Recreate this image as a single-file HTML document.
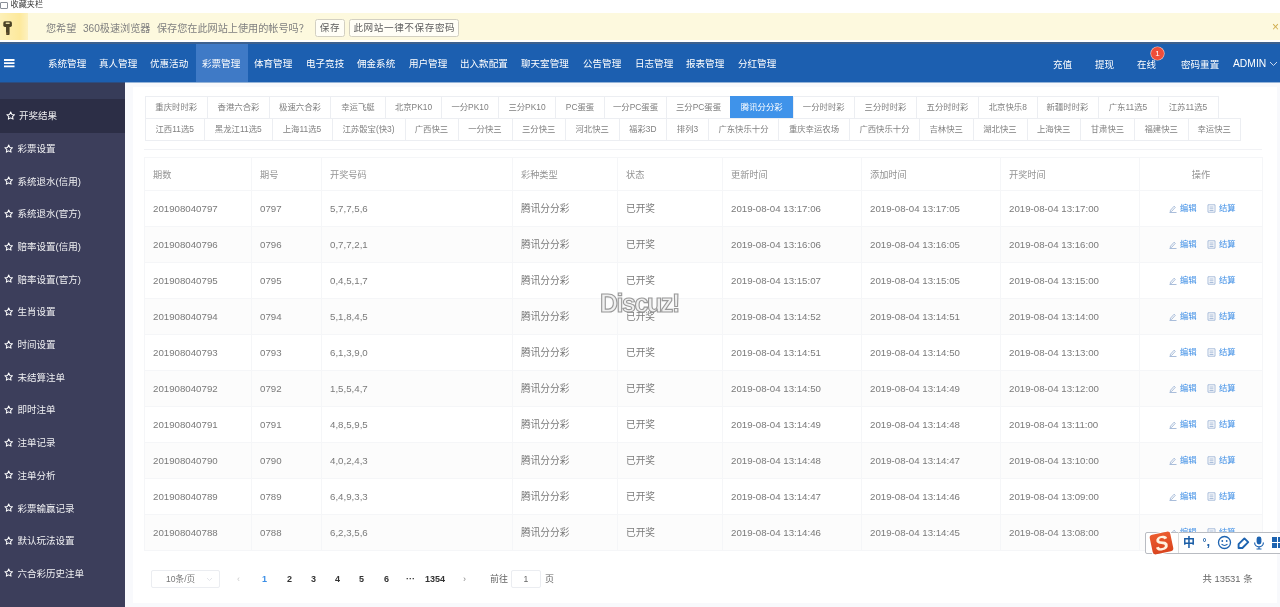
<!DOCTYPE html><html lang="zh-CN"><head><meta charset="utf-8"><title>开奖结果</title><style>
*{box-sizing:border-box;margin:0;padding:0}
html,body{width:1280px;height:607px;overflow:hidden;background:#fff}
body{filter:blur(.45px);font-family:"Liberation Sans","Noto Sans CJK SC",sans-serif;position:relative;color:#555;font-size:9.3px}
.abs{position:absolute}
#fav{left:0;top:0;width:1280px;height:13px;background:#fff;color:#333;font-size:8.1px;line-height:12px}
#fav span{position:absolute;left:10.6px;top:-1.2px}
#fav i{position:absolute;left:0;top:2px;width:8px;height:7px;border:1px solid #8a8f99;border-radius:1px}
#ybar{left:0;top:13px;width:1280px;height:27px;background:#fdf9de;color:#808080;font-size:10.15px;line-height:28px}
#ybar .k{position:absolute;left:0;top:0;width:28px;height:27px;background:linear-gradient(90deg,#fdf0b8 0,#fde99c 70%,#fdf1c0 100%)}
#ybar .t{position:absolute;left:46px;top:1.5px;white-space:nowrap;word-spacing:3.7px}
.btn{position:absolute;top:6px;height:18px;line-height:16px;border:1px solid #d3d0c2;border-radius:2.5px;background:#fffef6;color:#606060;font-size:9.6px;text-align:center;letter-spacing:0.6px;padding-left:.6px}
#nav{left:0;top:42px;width:1280px;height:40px;border-top:2px solid #3d618f;background:#1c5fb0;color:#fff;font-size:9.55px;line-height:41px}
#nav .it{position:absolute;top:-3.2px;height:41px;white-space:nowrap;line-height:45px}
#nav .act{position:absolute;left:196px;top:0;width:52px;height:38px;background:#3f7ac6}
#side{left:0;top:82px;width:124.5px;height:525px;background:#3c3e5b;color:rgba(255,255,255,.92);font-size:9.5px}
#side .top{position:absolute;left:0;top:0;width:124.5px;height:17px;background:#373c59}
#side .on{position:absolute;left:0;top:17px;width:124.5px;height:33.5px;background:#2c2e46}
#side .it{position:absolute;left:17.6px;white-space:nowrap;height:14px;line-height:14px}
#side svg{position:absolute;left:4.4px}
#main{left:124.5px;top:82px;width:1155.5px;height:525px;background:#f8f9fc}
#card{left:8px;top:4.5px;width:1144px;height:516.5px;background:#fff}
.tab{position:absolute;height:23px;line-height:21px;border:1px solid #eceef2;text-align:center;font-size:8.4px;color:#808080;background:#fff;white-space:nowrap}
.tab.on{background:#3f93ea;border-color:#3f93ea;color:#fff}
table{border-collapse:collapse;position:absolute;left:144px;top:157px;width:1118px;table-layout:fixed;font-size:9.7px;color:#7a7a7a}
th,td{border:1px solid #f5f6f8;text-align:left;padding:0 0 1px 8px;font-weight:normal;white-space:nowrap}
th{height:33px;color:#939393;font-size:9.2px}
td{height:36px}
tr.s td{background:#fcfcfc}
td.op,th.op{text-align:center;padding:0}
td.op{color:#3f8fe6;font-size:8.3px;position:relative}
td.op span{position:absolute;top:11.2px;line-height:12px}
td.op svg{position:absolute;top:12.8px}
.pg{position:absolute;top:572px;height:14px;line-height:14px;font-size:9px;color:#444;white-space:nowrap}
</style></head><body>
<div id="fav" class="abs"><i></i><span>收藏夹栏</span></div>
<div id="ybar" class="abs"><div class="k"><svg width="28" height="28" viewBox="0 0 28 28"><rect x="3.3" y="8.3" width="8.6" height="5.6" rx="1.6" fill="#4a4226"/><rect x="6" y="13" width="3.6" height="9" rx="1" fill="#4f4528"/><rect x="5.6" y="9.6" width="4.2" height="1.3" rx=".6" fill="#e9dca6"/><rect x="6.2" y="19.6" width="1.2" height="1.2" fill="#a07a4a"/></svg></div><div class="t">您希望 360极速浏览器 保存您在此网站上使用的帐号吗？</div><div class="btn" style="left:315px;width:29.5px">保存</div><div class="btn" style="left:349.3px;width:109.5px">此网站一律不保存密码</div><div class="abs" style="left:1272px;top:0;color:#d0ae4e;font-size:12px">×</div></div>
<div id="nav" class="abs"><div class="act"></div>
<svg class="abs" style="left:4px;top:15.1px" width="11" height="10" viewBox="0 0 11 10"><path d="M0 1h10.5M0 4.2h10.5M0 7.4h10.5" stroke="#fff" stroke-width="1.8"/></svg>
<div class="it" style="left:48px">系统管理</div>
<div class="it" style="left:99px">真人管理</div>
<div class="it" style="left:150px">优惠活动</div>
<div class="it" style="left:202px">彩票管理</div>
<div class="it" style="left:254px">体育管理</div>
<div class="it" style="left:306px">电子竞技</div>
<div class="it" style="left:357px">佣金系统</div>
<div class="it" style="left:409px">用户管理</div>
<div class="it" style="left:460px">出入款配置</div>
<div class="it" style="left:521px">聊天室管理</div>
<div class="it" style="left:583px">公告管理</div>
<div class="it" style="left:635px">日志管理</div>
<div class="it" style="left:686px">报表管理</div>
<div class="it" style="left:738px">分红管理</div>
<div class="it" style="left:1053px;top:-2.2px">充值</div>
<div class="it" style="left:1095px;top:-2.2px">提现</div>
<div class="it" style="left:1137px;top:-2.2px">在线</div>
<div class="it" style="left:1181px;top:-2.2px">密码重置</div>
<div class="it" style="left:1233px;font-size:10.3px">ADMIN</div>
<svg class="abs" style="left:1269px;top:17px" width="9" height="6" viewBox="0 0 9 6"><path d="M1 1l3.5 3.5L8 1" stroke="#c9d8ef" stroke-width="1" fill="none"/></svg>
<div class="abs" style="left:1151px;top:3px;width:13px;height:13px;border-radius:6.5px;box-shadow:0 0 0 .6px #f3c9c0;background:#ee4d3a;color:#fff;font-size:8px;line-height:13px;text-align:center">1</div>
</div>
<div id="side" class="abs"><div class="top"></div><div class="on"></div>
<svg style="top:28.8px;margin-left:1.5px" width="9.4" height="9.4" viewBox="0 0 24 24"><path d="M12 2.5l2.9 6.2 6.8.8-5 4.7 1.3 6.7-6-3.3-6 3.3 1.3-6.7-5-4.7 6.8-.8z" fill="none" stroke="#fff" stroke-width="2.6" stroke-linejoin="round"/></svg>
<div class="it" style="top:27.3px;margin-left:1.5px">开奖结果</div>
<svg style="top:61.5px" width="9.4" height="9.4" viewBox="0 0 24 24"><path d="M12 2.5l2.9 6.2 6.8.8-5 4.7 1.3 6.7-6-3.3-6 3.3 1.3-6.7-5-4.7 6.8-.8z" fill="none" stroke="#fff" stroke-width="2.6" stroke-linejoin="round"/></svg>
<div class="it" style="top:60.0px">彩票设置</div>
<svg style="top:94.2px" width="9.4" height="9.4" viewBox="0 0 24 24"><path d="M12 2.5l2.9 6.2 6.8.8-5 4.7 1.3 6.7-6-3.3-6 3.3 1.3-6.7-5-4.7 6.8-.8z" fill="none" stroke="#fff" stroke-width="2.6" stroke-linejoin="round"/></svg>
<div class="it" style="top:92.7px">系统退水(信用)</div>
<svg style="top:126.8px" width="9.4" height="9.4" viewBox="0 0 24 24"><path d="M12 2.5l2.9 6.2 6.8.8-5 4.7 1.3 6.7-6-3.3-6 3.3 1.3-6.7-5-4.7 6.8-.8z" fill="none" stroke="#fff" stroke-width="2.6" stroke-linejoin="round"/></svg>
<div class="it" style="top:125.3px">系统退水(官方)</div>
<svg style="top:159.5px" width="9.4" height="9.4" viewBox="0 0 24 24"><path d="M12 2.5l2.9 6.2 6.8.8-5 4.7 1.3 6.7-6-3.3-6 3.3 1.3-6.7-5-4.7 6.8-.8z" fill="none" stroke="#fff" stroke-width="2.6" stroke-linejoin="round"/></svg>
<div class="it" style="top:158.0px">赔率设置(信用)</div>
<svg style="top:192.2px" width="9.4" height="9.4" viewBox="0 0 24 24"><path d="M12 2.5l2.9 6.2 6.8.8-5 4.7 1.3 6.7-6-3.3-6 3.3 1.3-6.7-5-4.7 6.8-.8z" fill="none" stroke="#fff" stroke-width="2.6" stroke-linejoin="round"/></svg>
<div class="it" style="top:190.7px">赔率设置(官方)</div>
<svg style="top:224.9px" width="9.4" height="9.4" viewBox="0 0 24 24"><path d="M12 2.5l2.9 6.2 6.8.8-5 4.7 1.3 6.7-6-3.3-6 3.3 1.3-6.7-5-4.7 6.8-.8z" fill="none" stroke="#fff" stroke-width="2.6" stroke-linejoin="round"/></svg>
<div class="it" style="top:223.4px">生肖设置</div>
<svg style="top:257.6px" width="9.4" height="9.4" viewBox="0 0 24 24"><path d="M12 2.5l2.9 6.2 6.8.8-5 4.7 1.3 6.7-6-3.3-6 3.3 1.3-6.7-5-4.7 6.8-.8z" fill="none" stroke="#fff" stroke-width="2.6" stroke-linejoin="round"/></svg>
<div class="it" style="top:256.1px">时间设置</div>
<svg style="top:290.2px" width="9.4" height="9.4" viewBox="0 0 24 24"><path d="M12 2.5l2.9 6.2 6.8.8-5 4.7 1.3 6.7-6-3.3-6 3.3 1.3-6.7-5-4.7 6.8-.8z" fill="none" stroke="#fff" stroke-width="2.6" stroke-linejoin="round"/></svg>
<div class="it" style="top:288.7px">未结算注单</div>
<svg style="top:322.9px" width="9.4" height="9.4" viewBox="0 0 24 24"><path d="M12 2.5l2.9 6.2 6.8.8-5 4.7 1.3 6.7-6-3.3-6 3.3 1.3-6.7-5-4.7 6.8-.8z" fill="none" stroke="#fff" stroke-width="2.6" stroke-linejoin="round"/></svg>
<div class="it" style="top:321.4px">即时注单</div>
<svg style="top:355.6px" width="9.4" height="9.4" viewBox="0 0 24 24"><path d="M12 2.5l2.9 6.2 6.8.8-5 4.7 1.3 6.7-6-3.3-6 3.3 1.3-6.7-5-4.7 6.8-.8z" fill="none" stroke="#fff" stroke-width="2.6" stroke-linejoin="round"/></svg>
<div class="it" style="top:354.1px">注单记录</div>
<svg style="top:388.3px" width="9.4" height="9.4" viewBox="0 0 24 24"><path d="M12 2.5l2.9 6.2 6.8.8-5 4.7 1.3 6.7-6-3.3-6 3.3 1.3-6.7-5-4.7 6.8-.8z" fill="none" stroke="#fff" stroke-width="2.6" stroke-linejoin="round"/></svg>
<div class="it" style="top:386.8px">注单分析</div>
<svg style="top:421.0px" width="9.4" height="9.4" viewBox="0 0 24 24"><path d="M12 2.5l2.9 6.2 6.8.8-5 4.7 1.3 6.7-6-3.3-6 3.3 1.3-6.7-5-4.7 6.8-.8z" fill="none" stroke="#fff" stroke-width="2.6" stroke-linejoin="round"/></svg>
<div class="it" style="top:419.5px">彩票输赢记录</div>
<svg style="top:453.6px" width="9.4" height="9.4" viewBox="0 0 24 24"><path d="M12 2.5l2.9 6.2 6.8.8-5 4.7 1.3 6.7-6-3.3-6 3.3 1.3-6.7-5-4.7 6.8-.8z" fill="none" stroke="#fff" stroke-width="2.6" stroke-linejoin="round"/></svg>
<div class="it" style="top:452.1px">默认玩法设置</div>
<svg style="top:486.3px" width="9.4" height="9.4" viewBox="0 0 24 24"><path d="M12 2.5l2.9 6.2 6.8.8-5 4.7 1.3 6.7-6-3.3-6 3.3 1.3-6.7-5-4.7 6.8-.8z" fill="none" stroke="#fff" stroke-width="2.6" stroke-linejoin="round"/></svg>
<div class="it" style="top:484.8px">六合彩历史注单</div>
</div>
<div id="main" class="abs"><div id="card" class="abs"></div></div>
<div class="abs" style="left:0;top:82px;width:1280px;height:1px;background:rgba(28,95,176,.45)"></div>
<div class="abs" style="left:144px;top:149px;width:1118px;height:1px;background:#f1f2f5"></div>
<div class="tab" style="left:144.5px;top:96px;width:63.5px">重庆时时彩</div>
<div class="tab" style="left:207px;top:96px;width:63px">香港六合彩</div>
<div class="tab" style="left:269px;top:96px;width:62px">极速六合彩</div>
<div class="tab" style="left:330px;top:96px;width:56px">幸运飞艇</div>
<div class="tab" style="left:385px;top:96px;width:57px">北京PK10</div>
<div class="tab" style="left:441px;top:96px;width:58px">一分PK10</div>
<div class="tab" style="left:498px;top:96px;width:58px">三分PK10</div>
<div class="tab" style="left:555px;top:96px;width:50px">PC蛋蛋</div>
<div class="tab" style="left:604px;top:96px;width:63px">一分PC蛋蛋</div>
<div class="tab" style="left:666px;top:96px;width:65px">三分PC蛋蛋</div>
<div class="tab on" style="left:730px;top:96px;width:63.5px">腾讯分分彩</div>
<div class="tab" style="left:792.5px;top:96px;width:62.5px">一分时时彩</div>
<div class="tab" style="left:854px;top:96px;width:63px">三分时时彩</div>
<div class="tab" style="left:916px;top:96px;width:63px">五分时时彩</div>
<div class="tab" style="left:978px;top:96px;width:59.5px">北京快乐8</div>
<div class="tab" style="left:1036.5px;top:96px;width:62px">新疆时时彩</div>
<div class="tab" style="left:1097.5px;top:96px;width:61px">广东11选5</div>
<div class="tab" style="left:1157.5px;top:96px;width:61px">江苏11选5</div>
<div class="tab" style="left:144.5px;top:118px;width:60.5px">江西11选5</div>
<div class="tab" style="left:204px;top:118px;width:68.5px">黑龙江11选5</div>
<div class="tab" style="left:271.5px;top:118px;width:61px">上海11选5</div>
<div class="tab" style="left:331.5px;top:118px;width:74px">江苏骰宝(快3)</div>
<div class="tab" style="left:404.5px;top:118px;width:54px">广西快三</div>
<div class="tab" style="left:457.5px;top:118px;width:55px">一分快三</div>
<div class="tab" style="left:511.5px;top:118px;width:54.5px">三分快三</div>
<div class="tab" style="left:565px;top:118px;width:54.5px">河北快三</div>
<div class="tab" style="left:618.5px;top:118px;width:48.5px">福彩3D</div>
<div class="tab" style="left:666px;top:118px;width:43px">排列3</div>
<div class="tab" style="left:708px;top:118px;width:71px">广东快乐十分</div>
<div class="tab" style="left:778px;top:118px;width:72px">重庆幸运农场</div>
<div class="tab" style="left:849px;top:118px;width:71px">广西快乐十分</div>
<div class="tab" style="left:919px;top:118px;width:54.5px">吉林快三</div>
<div class="tab" style="left:972.5px;top:118px;width:55px">湖北快三</div>
<div class="tab" style="left:1026.5px;top:118px;width:54.5px">上海快三</div>
<div class="tab" style="left:1080px;top:118px;width:55px">甘肃快三</div>
<div class="tab" style="left:1134px;top:118px;width:54.5px">福建快三</div>
<div class="tab" style="left:1187.5px;top:118px;width:53.5px">幸运快三</div>
<table><colgroup><col style="width:107px"><col style="width:70px"><col style="width:191px"><col style="width:105px"><col style="width:105px"><col style="width:139px"><col style="width:139px"><col style="width:139px"><col style="width:123px"></colgroup>
<tr><th>期数</th><th>期号</th><th>开奖号码</th><th>彩种类型</th><th>状态</th><th>更新时间</th><th>添加时间</th><th>开奖时间</th><th class="op">操作</th></tr>
<tr><td>201908040797</td><td>0797</td><td>5,7,7,5,6</td><td>腾讯分分彩</td><td>已开奖</td><td>2019-08-04 13:17:06</td><td>2019-08-04 13:17:05</td><td>2019-08-04 13:17:00</td><td class="op"><svg style="left:29px" width="8" height="9" viewBox="0 0 8 9"><path d="M1.5 6.2l3.6-4 1.2 1.1-3.6 4-1.5.3zM.5 8.5h7" fill="none" stroke="#9fb6d6" stroke-width=".9"/></svg><span style="left:40px">编辑</span><svg style="left:66.5px" width="9" height="9" viewBox="0 0 9 9"><path d="M1 .8h7v7.4h-7zM2.5 3h4M2.5 4.8h4M2.5 6.5h4" fill="none" stroke="#9fb6d6" stroke-width=".9"/></svg><span style="left:79px">结算</span></td></tr>
<tr class="s"><td>201908040796</td><td>0796</td><td>0,7,7,2,1</td><td>腾讯分分彩</td><td>已开奖</td><td>2019-08-04 13:16:06</td><td>2019-08-04 13:16:05</td><td>2019-08-04 13:16:00</td><td class="op"><svg style="left:29px" width="8" height="9" viewBox="0 0 8 9"><path d="M1.5 6.2l3.6-4 1.2 1.1-3.6 4-1.5.3zM.5 8.5h7" fill="none" stroke="#9fb6d6" stroke-width=".9"/></svg><span style="left:40px">编辑</span><svg style="left:66.5px" width="9" height="9" viewBox="0 0 9 9"><path d="M1 .8h7v7.4h-7zM2.5 3h4M2.5 4.8h4M2.5 6.5h4" fill="none" stroke="#9fb6d6" stroke-width=".9"/></svg><span style="left:79px">结算</span></td></tr>
<tr><td>201908040795</td><td>0795</td><td>0,4,5,1,7</td><td>腾讯分分彩</td><td>已开奖</td><td>2019-08-04 13:15:07</td><td>2019-08-04 13:15:05</td><td>2019-08-04 13:15:00</td><td class="op"><svg style="left:29px" width="8" height="9" viewBox="0 0 8 9"><path d="M1.5 6.2l3.6-4 1.2 1.1-3.6 4-1.5.3zM.5 8.5h7" fill="none" stroke="#9fb6d6" stroke-width=".9"/></svg><span style="left:40px">编辑</span><svg style="left:66.5px" width="9" height="9" viewBox="0 0 9 9"><path d="M1 .8h7v7.4h-7zM2.5 3h4M2.5 4.8h4M2.5 6.5h4" fill="none" stroke="#9fb6d6" stroke-width=".9"/></svg><span style="left:79px">结算</span></td></tr>
<tr class="s"><td>201908040794</td><td>0794</td><td>5,1,8,4,5</td><td>腾讯分分彩</td><td>已开奖</td><td>2019-08-04 13:14:52</td><td>2019-08-04 13:14:51</td><td>2019-08-04 13:14:00</td><td class="op"><svg style="left:29px" width="8" height="9" viewBox="0 0 8 9"><path d="M1.5 6.2l3.6-4 1.2 1.1-3.6 4-1.5.3zM.5 8.5h7" fill="none" stroke="#9fb6d6" stroke-width=".9"/></svg><span style="left:40px">编辑</span><svg style="left:66.5px" width="9" height="9" viewBox="0 0 9 9"><path d="M1 .8h7v7.4h-7zM2.5 3h4M2.5 4.8h4M2.5 6.5h4" fill="none" stroke="#9fb6d6" stroke-width=".9"/></svg><span style="left:79px">结算</span></td></tr>
<tr><td>201908040793</td><td>0793</td><td>6,1,3,9,0</td><td>腾讯分分彩</td><td>已开奖</td><td>2019-08-04 13:14:51</td><td>2019-08-04 13:14:50</td><td>2019-08-04 13:13:00</td><td class="op"><svg style="left:29px" width="8" height="9" viewBox="0 0 8 9"><path d="M1.5 6.2l3.6-4 1.2 1.1-3.6 4-1.5.3zM.5 8.5h7" fill="none" stroke="#9fb6d6" stroke-width=".9"/></svg><span style="left:40px">编辑</span><svg style="left:66.5px" width="9" height="9" viewBox="0 0 9 9"><path d="M1 .8h7v7.4h-7zM2.5 3h4M2.5 4.8h4M2.5 6.5h4" fill="none" stroke="#9fb6d6" stroke-width=".9"/></svg><span style="left:79px">结算</span></td></tr>
<tr class="s"><td>201908040792</td><td>0792</td><td>1,5,5,4,7</td><td>腾讯分分彩</td><td>已开奖</td><td>2019-08-04 13:14:50</td><td>2019-08-04 13:14:49</td><td>2019-08-04 13:12:00</td><td class="op"><svg style="left:29px" width="8" height="9" viewBox="0 0 8 9"><path d="M1.5 6.2l3.6-4 1.2 1.1-3.6 4-1.5.3zM.5 8.5h7" fill="none" stroke="#9fb6d6" stroke-width=".9"/></svg><span style="left:40px">编辑</span><svg style="left:66.5px" width="9" height="9" viewBox="0 0 9 9"><path d="M1 .8h7v7.4h-7zM2.5 3h4M2.5 4.8h4M2.5 6.5h4" fill="none" stroke="#9fb6d6" stroke-width=".9"/></svg><span style="left:79px">结算</span></td></tr>
<tr><td>201908040791</td><td>0791</td><td>4,8,5,9,5</td><td>腾讯分分彩</td><td>已开奖</td><td>2019-08-04 13:14:49</td><td>2019-08-04 13:14:48</td><td>2019-08-04 13:11:00</td><td class="op"><svg style="left:29px" width="8" height="9" viewBox="0 0 8 9"><path d="M1.5 6.2l3.6-4 1.2 1.1-3.6 4-1.5.3zM.5 8.5h7" fill="none" stroke="#9fb6d6" stroke-width=".9"/></svg><span style="left:40px">编辑</span><svg style="left:66.5px" width="9" height="9" viewBox="0 0 9 9"><path d="M1 .8h7v7.4h-7zM2.5 3h4M2.5 4.8h4M2.5 6.5h4" fill="none" stroke="#9fb6d6" stroke-width=".9"/></svg><span style="left:79px">结算</span></td></tr>
<tr class="s"><td>201908040790</td><td>0790</td><td>4,0,2,4,3</td><td>腾讯分分彩</td><td>已开奖</td><td>2019-08-04 13:14:48</td><td>2019-08-04 13:14:47</td><td>2019-08-04 13:10:00</td><td class="op"><svg style="left:29px" width="8" height="9" viewBox="0 0 8 9"><path d="M1.5 6.2l3.6-4 1.2 1.1-3.6 4-1.5.3zM.5 8.5h7" fill="none" stroke="#9fb6d6" stroke-width=".9"/></svg><span style="left:40px">编辑</span><svg style="left:66.5px" width="9" height="9" viewBox="0 0 9 9"><path d="M1 .8h7v7.4h-7zM2.5 3h4M2.5 4.8h4M2.5 6.5h4" fill="none" stroke="#9fb6d6" stroke-width=".9"/></svg><span style="left:79px">结算</span></td></tr>
<tr><td>201908040789</td><td>0789</td><td>6,4,9,3,3</td><td>腾讯分分彩</td><td>已开奖</td><td>2019-08-04 13:14:47</td><td>2019-08-04 13:14:46</td><td>2019-08-04 13:09:00</td><td class="op"><svg style="left:29px" width="8" height="9" viewBox="0 0 8 9"><path d="M1.5 6.2l3.6-4 1.2 1.1-3.6 4-1.5.3zM.5 8.5h7" fill="none" stroke="#9fb6d6" stroke-width=".9"/></svg><span style="left:40px">编辑</span><svg style="left:66.5px" width="9" height="9" viewBox="0 0 9 9"><path d="M1 .8h7v7.4h-7zM2.5 3h4M2.5 4.8h4M2.5 6.5h4" fill="none" stroke="#9fb6d6" stroke-width=".9"/></svg><span style="left:79px">结算</span></td></tr>
<tr class="s"><td>201908040788</td><td>0788</td><td>6,2,3,5,6</td><td>腾讯分分彩</td><td>已开奖</td><td>2019-08-04 13:14:46</td><td>2019-08-04 13:14:45</td><td>2019-08-04 13:08:00</td><td class="op"><svg style="left:29px" width="8" height="9" viewBox="0 0 8 9"><path d="M1.5 6.2l3.6-4 1.2 1.1-3.6 4-1.5.3zM.5 8.5h7" fill="none" stroke="#9fb6d6" stroke-width=".9"/></svg><span style="left:40px">编辑</span><svg style="left:66.5px" width="9" height="9" viewBox="0 0 9 9"><path d="M1 .8h7v7.4h-7zM2.5 3h4M2.5 4.8h4M2.5 6.5h4" fill="none" stroke="#9fb6d6" stroke-width=".9"/></svg><span style="left:79px">结算</span></td></tr>
</table>
<div class="abs" style="left:151px;top:569.5px;width:69px;height:18.5px;border:1px solid #ebedf1;border-radius:2px;font-size:8.6px;line-height:17px;color:#777;padding-left:14px">10条/页</div>
<div class="pg" style="left:262px;color:#3a8ee6;font-weight:bold">1</div>
<div class="pg" style="left:287px;color:#333;font-weight:bold">2</div>
<div class="pg" style="left:311px;color:#333;font-weight:bold">3</div>
<div class="pg" style="left:335px;color:#333;font-weight:bold">4</div>
<div class="pg" style="left:359px;color:#333;font-weight:bold">5</div>
<div class="pg" style="left:384px;color:#333;font-weight:bold">6</div>
<div class="pg" style="left:406px;color:#333;font-weight:bold">···</div>
<div class="pg" style="left:425px;color:#333;font-weight:bold">1354</div>
<div class="pg" style="left:237px;color:#ccc">‹</div><div class="pg" style="left:463px;color:#888">›</div><svg class="abs" style="left:206px;top:577px" width="7" height="5" viewBox="0 0 7 5"><path d="M1 1l2.5 2.5L6 1" stroke="#e3e5ea" stroke-width="1" fill="none"/></svg>
<div class="pg" style="left:490px;color:#666">前往</div><div class="abs" style="left:511px;top:569.5px;width:30px;height:18.5px;border:1px solid #ebedf1;border-radius:2px;font-size:8.6px;line-height:17px;color:#666;text-align:center">1</div><div class="pg" style="left:545px;color:#666">页</div>
<div class="pg" style="left:1202.5px;color:#666;font-size:9.4px">共 13531 条</div>
<div class="abs" style="left:600px;top:286px;font-size:25px;font-weight:bold;color:#f0f0f0;-webkit-text-stroke:1.1px #999;letter-spacing:-1.45px;line-height:34px">Discuz!</div>
<div class="abs" style="left:1145px;top:532px;width:140px;height:21.5px;background:#fff;border:1px solid #b9bcc2;border-radius:2px"></div>
<div class="abs" style="left:1150.5px;top:532.5px;width:21px;height:20px;background:linear-gradient(#ec5c2e,#d9451f);border-radius:3px;transform:rotate(-12deg);color:#fff3e0;font-weight:bold;font-size:20px;line-height:20px;box-shadow:0 0 0 1px #fff;text-align:center;font-style:italic">S</div>
<div class="abs" style="left:1178px;top:532px;width:1px;height:21px;background:#ddd"></div>
<div class="abs" style="left:1183px;top:534.5px;font-size:12px;line-height:16px;font-weight:bold;color:#1a5da6">中</div>
<div class="abs" style="left:1202.5px;top:538px;width:3.6px;height:3.6px;border:1.3px solid #1a5da6;border-radius:2px"></div><div class="abs" style="left:1206.5px;top:534px;font-size:13px;line-height:16px;font-weight:bold;color:#1a5da6">,</div>
<svg class="abs" style="left:1217px;top:535px" width="64" height="15" viewBox="0 0 64 15"><circle cx="7.5" cy="7.5" r="6" fill="none" stroke="#1d63b0" stroke-width="1.3"/><circle cx="5.3" cy="6" r=".9" fill="#1d63b0"/><circle cx="9.7" cy="6" r=".9" fill="#1d63b0"/><path d="M4.5 9.2q3 2.6 6 0" stroke="#1d63b0" fill="none" stroke-width="1.1"/><path d="M21.6 9.2l5.8-5.8 3.8 3.8-5.8 5.8h-3.8z" fill="none" stroke="#1d63b0" stroke-width="1.9" stroke-linejoin="round"/><rect x="39.6" y="1.5" width="4.8" height="8" rx="2.4" fill="#1d63b0"/><path d="M37.6 7.5a4.4 4.4 0 0 0 8.8 0M42 12v2M39.5 14h5" stroke="#1d63b0" fill="none" stroke-width="1.2"/><rect x="55" y="2" width="5" height="5" fill="#1d63b0"/><rect x="61" y="2" width="5" height="5" fill="#1d63b0"/><rect x="55" y="8" width="5" height="5" fill="#1d63b0"/><rect x="61" y="8" width="5" height="5" fill="#1d63b0"/></svg>
</body></html>
